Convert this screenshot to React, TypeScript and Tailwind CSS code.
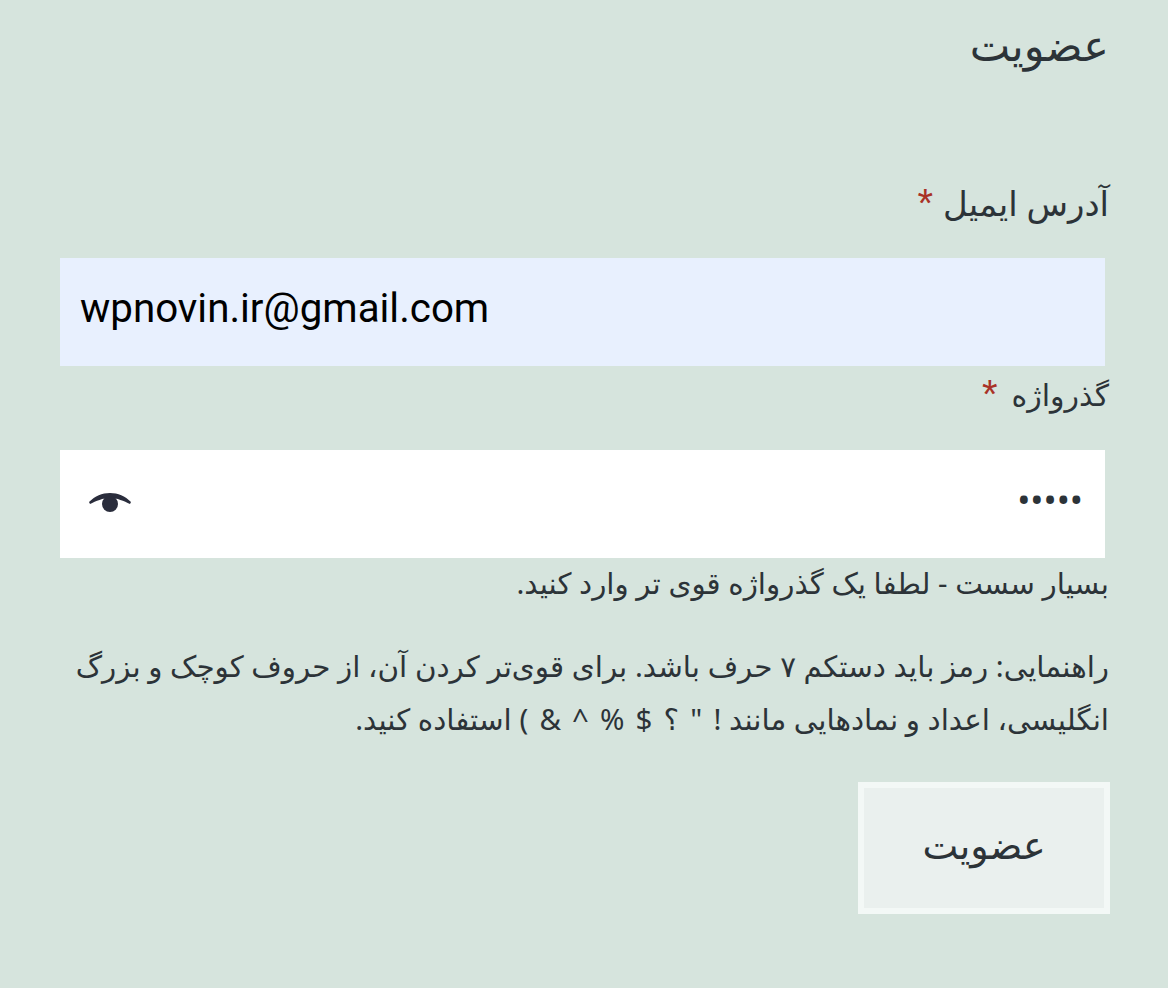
import { useState } from 'react'

const persian = '"Noto Sans", "DejaVu Sans", sans-serif'

function Eye() {
  return (
    <svg width="42" height="19" viewBox="0 0 42 19" className="mb-[4px] text-[#2a2d3c]" fill="currentColor">
      <path d="M0 9 C6 3 13 0 21 0 C29 0 36 3 42 9 L41 11 C35 8 28 5 21 5 C14 5 7 8 1 11 Z" />
      <circle cx="21" cy="11" r="8" />
    </svg>
  )
}

function Star() {
  return <span className="text-[#a93226] text-[40px] leading-none" style={{ fontFamily: '"Liberation Sans", sans-serif' }}>*</span>
}

export default function App() {
  const [email, setEmail] = useState('wpnovin.ir@gmail.com')
  const [password, setPassword] = useState('12345')

  return (
    <div dir="rtl" className="w-[1168px] h-[988px] overflow-hidden bg-[#d6e4dd] text-[#2c3338] pr-[59px] pl-[59px]" style={{ fontFamily: persian }}>
      <h2 className="pt-[18px] text-[43px] leading-[54px] font-normal">عضویت</h2>

      <form className="mt-[104px]" onSubmit={e => e.preventDefault()}>
        <label className="flex items-center gap-[10px] h-[54px] text-[34px]">
          <span>آدرس ایمیل</span> <Star />
        </label>
        <div dir="ltr" className="mt-[28px] w-[1045px] mr-[4px] h-[108px] bg-[#e8f0fe] flex items-center pl-[20px] pr-[21px] pb-[6px]">
          <input value={email} onChange={e => setEmail(e.target.value)} className="w-full bg-transparent outline-none text-[40.3px] text-black" style={{ fontFamily: 'Roboto, sans-serif' }} />
        </div>

        <label className="flex items-center gap-[14px] mt-[1px] h-[54px] text-[30px]">
          <span>گذرواژه</span> <Star />
        </label>
        <div className="mt-[29px] w-[1045px] mr-[4px] h-[108px] bg-white flex items-center justify-between pr-[22px] pl-[29px]">
          <input type="password" value={password} onChange={e => setPassword(e.target.value)} className="w-[200px] pb-[10px] bg-transparent outline-none text-[35px]" />
          <Eye />
        </div>

        <p className="-mt-[2px] text-[29.4px] leading-[54px]">بسیار سست - لطفا یک گذرواژه قوی تر وارد کنید.</p>
        <p className="mt-[30px] text-[29.4px] leading-[53px]">
          راهنمایی: رمز باید دستکم ۷ حرف باشد. برای قوی‌تر کردن آن، از حروف کوچک و بزرگ
          <br />
          انگلیسی، اعداد و نمادهایی مانند <bdi dir="rtl" className="[word-spacing:3.5px]">! " ؟ $ % ^ &amp; )</bdi> استفاده کنید.
        </p>
        <button className="block mt-[36px] -mr-px w-[252px] h-[132px] pb-[8px] bg-[#eaf0ee] border-[6px] border-[#f3f8f6] text-[38px] text-[#2c3338]">عضویت</button>
      </form>
    </div>
  )
}
